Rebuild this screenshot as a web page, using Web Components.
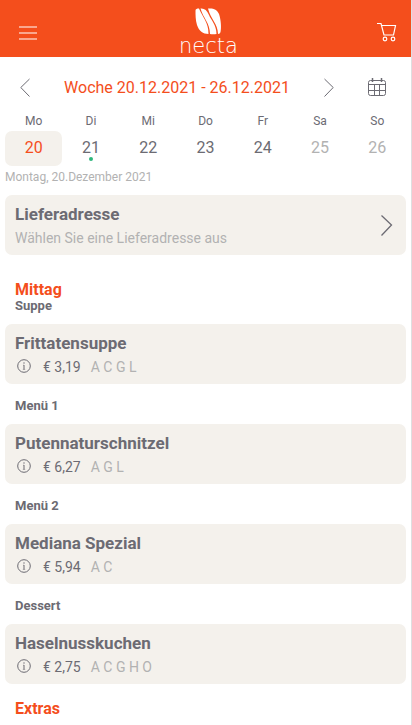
<!DOCTYPE html>
<html lang="de">
<head>
<meta charset="utf-8">
<meta name="viewport" content="width=device-width, initial-scale=1">
<title>necta</title>
<style>
    :root {
        --brand: #f44e1c;
        --text: #6c6b73;
        --muted: #b2b2b2;
        --panel: #f4f1ec;
        --line: #dedee0;
    }
    body {
        margin: 0;
        background: #fff;
        color: var(--text);
        font-family: Roboto, "Liberation Sans", sans-serif;
        font-size: 14px;
    }
</style>
</head>
<body>
<menu-app></menu-app>

<script>
class AppHeader extends HTMLElement {
    constructor() {
        super();
        this.attachShadow({ mode: 'open' });
        this.shadowRoot.innerHTML = `
            <style>
                :host { display: block; background: var(--brand); color: #fff; }
                header {
                    display: flex;
                    justify-content: space-between;
                    align-items: flex-end;
                    box-sizing: border-box;
                    height: 57px;
                    padding: 0 13px 0 18px;
                }
                button {
                    display: flex;
                    margin: 0 0 14px;
                    padding: 0;
                    border: none;
                    background: none;
                    color: inherit;
                    cursor: pointer;
                }
                .logo {
                    display: flex;
                    flex-direction: column;
                    align-items: center;
                    margin-left: 3px;
                    color: #fff;
                    text-decoration: none;
                }
                .logo span { font: 200 21px/22px "DejaVu Sans Light", "DejaVu Sans", sans-serif; }
            </style>
            <header>
                <button aria-label="Menü">
                    <svg width="20" height="20" viewBox="0 0 20 20" fill="none" stroke="#faa78e" stroke-width="2">
                        <path d="M1 4h18M1 10h18M1 16h18"/>
                    </svg>
                </button>
                <a class="logo" href="#">
                    <svg width="28" height="28" viewBox="0 0 28 28" fill="#fff" aria-hidden="true">
                        <path d="M1.500 3.500C1.500 2 3 1.500 5 1.500C7 6 9 9 11 13C13 17 14.500 21 14.500 27C9 27 5 24 3 18C1.500 13 1.500 8 1.500 3.500Z"/>
                        <path d="M6.500 1.500C10 1 13 3 15 8C17 13 22.500 18 22.500 27C20 27.500 17.500 27.300 16 27C16 16 9 11 6.500 1.500Z"/>
                        <path d="M14 1.500C19 1 23 2 25 7C27 13 27.500 21 26.500 25C26.200 26.300 25.500 26.800 24 27C24 17 16.500 12 14 1.500Z"/>
                    </svg>
                    <span>necta</span>
                </a>
                <button aria-label="Warenkorb">
                    <svg width="22" height="22" viewBox="0 0 22 22" fill="none" stroke="#fff" stroke-width="1.200">
                        <path d="M1 2.500h4l3 11.500h9.500l2-9.500H6"/>
                        <circle cx="9" cy="18" r="1.800"/>
                        <circle cx="17" cy="18" r="1.800"/>
                    </svg>
                </button>
            </header>
        `;
    }
}

class WeekNav extends HTMLElement {
    constructor() {
        super();
        this.attachShadow({ mode: 'open' });
        this.shadowRoot.innerHTML = `
            <style>
                :host { display: block; padding: 20px 24px 14px 20px; }
                nav { display: flex; align-items: center; }
                button {
                    display: flex;
                    padding: 0;
                    border: none;
                    background: none;
                    color: inherit;
                    cursor: pointer;
                }
                .calendar { margin-left: 33px; }
                h1 {
                    flex: 1;
                    margin: 0;
                    color: var(--brand);
                    font-size: 16px;
                    font-weight: 400;
                    line-height: 22px;
                    text-align: center;
                }
                svg { fill: none; stroke: currentColor; }
            </style>
            <nav aria-label="Woche">
                <button aria-label="Vorherige Woche">
                    <svg width="10" height="20" viewBox="0 0 10 20"><path d="M9.500 1L.800 9.500l8.700 9"/></svg>
                </button>
                <h1><slot></slot></h1>
                <button aria-label="Nächste Woche">
                    <svg width="10" height="20" viewBox="0 0 10 20"><path d="M.500 1l8.700 8.500L.500 18.500"/></svg>
                </button>
                <button class="calendar" aria-label="Kalender">
                    <svg width="20" height="20" viewBox="0 0 20 20">
                        <rect x="1.500" y="2.500" width="17" height="15" rx="2"/>
                        <path d="M1.500 6.500h17M2 12.500h16M7.500 7v10M12.500 7v10"/>
                        <path stroke-width="1.500" d="M5.500 0v4M14.500 0v4"/>
                    </svg>
                </button>
            </nav>
        `;
    }
}

class WeekDay extends HTMLElement {
    constructor() {
        super();
        this.attachShadow({ mode: 'open' });
        this.shadowRoot.innerHTML = `
            <style>
                :host { display: block; flex: 1 1 0; text-align: center; }
                label { display: block; font-size: 12px; line-height: 16px; }
                button {
                    position: relative;
                    width: 100%;
                    height: 35px;
                    margin-top: 2px;
                    padding: 0 0 2px;
                    border: none;
                    border-radius: 7px;
                    background: none;
                    color: inherit;
                    font: inherit;
                    font-size: 16px;
                    cursor: pointer;
                }
                :host([selected]) button { background: var(--panel); color: var(--brand); }
                :host([inactive]) button { color: var(--muted); }
                :host([ordered]) button::after {
                    content: "";
                    position: absolute;
                    left: 50%;
                    bottom: 5px;
                    width: 4px;
                    height: 4px;
                    margin-left: -2px;
                    border-radius: 50%;
                    background: #2fb67c;
                }
            </style>
            <label for="day"></label>
            <button id="day"><slot></slot></button>
        `;
        this.shadowRoot.querySelector('label').textContent = this.getAttribute('name');
    }
}

class AddressCard extends HTMLElement {
    constructor() {
        super();
        this.attachShadow({ mode: 'open' });
        this.shadowRoot.innerHTML = `
            <style>
                :host { display: block; margin: 10px 5px 26px; }
                button {
                    display: flex;
                    align-items: center;
                    justify-content: space-between;
                    width: 100%;
                    padding: 8px 13px 6px 10px;
                    border: none;
                    border-radius: 7px;
                    background: var(--panel);
                    color: inherit;
                    font: inherit;
                    text-align: left;
                    cursor: pointer;
                }
                .text { display: flex; flex-direction: column; gap: 2px; line-height: 22px; }
                strong { font-size: 17px; }
                .hint { color: var(--muted); }
                svg { fill: none; stroke: currentColor; stroke-width: 1.3; }
            </style>
            <button>
                <span class="text">
                    <strong>Lieferadresse</strong>
                    <span class="hint"><slot></slot></span>
                </span>
                <svg width="12" height="22" viewBox="0 0 12 22" aria-hidden="true"><path d="M.500 .500L10.500 10L.500 20.500"/></svg>
            </button>
        `;
    }
}

class MenuCategory extends HTMLElement {
    constructor() {
        super();
        this.attachShadow({ mode: 'open' });
        this.shadowRoot.innerHTML = `
            <style>
                :host { display: block; margin-top: 16px; }
                h2 {
                    margin: 0 15px;
                    color: var(--brand);
                    font-size: 16px;
                    font-weight: 700;
                    line-height: 18px;
                }
                .items { display: flex; flex-direction: column; gap: 15px; }
            </style>
            <section>
                <h2></h2>
                <div class="items"><slot></slot></div>
            </section>
        `;
        this.shadowRoot.querySelector('h2').textContent = this.getAttribute('name');
    }
}

class MenuItem extends HTMLElement {
    constructor() {
        super();
        this.attachShadow({ mode: 'open' });
        this.shadowRoot.innerHTML = `
            <style>
                :host { display: block; }
                h3 { margin: 0 15px 11px; font-size: 13px; font-weight: 700; line-height: 14px; }
                article {
                    margin: 0 5px;
                    padding: 8px 10px 6px;
                    border-radius: 7px;
                    background: var(--panel);
                    line-height: 22px;
                }
                h4 { margin: 0 0 2px; font-size: 17px; font-weight: 700; }
                .details { display: flex; align-items: center; }
                button {
                    display: flex;
                    margin: 0 10px 0 0;
                    padding: 0 1px;
                    border: none;
                    background: none;
                    color: inherit;
                    cursor: pointer;
                }
                .allergens { margin-left: 10px; color: var(--muted); }
            </style>
            <h3></h3>
            <article>
                <h4><slot></slot></h4>
                <div class="details">
                    <button aria-label="Information">
                        <svg width="16" height="16" viewBox="0 0 16 16" fill="none" stroke="currentColor">
                            <circle cx="8" cy="7" r="6.300"/>
                            <path d="M8 6v4.500"/>
                            <path stroke-width=".500" d="M7 6.200h1M6.800 10.400h2.400"/>
                            <circle cx="8" cy="4" r=".700" fill="currentColor" stroke="none"/>
                        </svg>
                    </button>
                    <span class="price"></span>
                    <span class="allergens"></span>
                </div>
            </article>
        `;
        this.shadowRoot.querySelector('h3').textContent = this.getAttribute('course');
        this.shadowRoot.querySelector('.price').textContent = this.getAttribute('price');
        this.shadowRoot.querySelector('.allergens').textContent = this.getAttribute('allergens');
    }
}

class MenuApp extends HTMLElement {
    constructor() {
        super();
        this.attachShadow({ mode: 'open' });
        this.shadowRoot.innerHTML = `
            <style>
                :host {
                    display: block;
                    box-sizing: border-box;
                    min-height: 100vh;
                    border-right: 1px solid var(--line);
                }
                .days { display: flex; margin: 0 5px; }
                .date {
                    margin: 3px 5px 0;
                    color: var(--muted);
                    font-size: 12px;
                    line-height: 16px;
                }
            </style>
            <app-header></app-header>
            <main>
                <week-nav>Woche 20.12.2021 - 26.12.2021</week-nav>
                <div class="days">
                    <week-day name="Mo" selected>20</week-day>
                    <week-day name="Di" ordered>21</week-day>
                    <week-day name="Mi">22</week-day>
                    <week-day name="Do">23</week-day>
                    <week-day name="Fr">24</week-day>
                    <week-day name="Sa" inactive>25</week-day>
                    <week-day name="So" inactive>26</week-day>
                </div>
                <p class="date">Montag, 20.Dezember 2021</p>
                <address-card>Wählen Sie eine Lieferadresse aus</address-card>
                <menu-category name="Mittag">
                    <menu-item course="Suppe" price="€ 3,19" allergens="A C G L">Frittatensuppe</menu-item>
                    <menu-item course="Menü 1" price="€ 6,27" allergens="A G L">Putennaturschnitzel</menu-item>
                    <menu-item course="Menü 2" price="€ 5,94" allergens="A C">Mediana Spezial</menu-item>
                    <menu-item course="Dessert" price="€ 2,75" allergens="A C G H O">Haselnusskuchen</menu-item>
                </menu-category>
                <menu-category name="Extras"></menu-category>
            </main>
        `;
    }
}

customElements.define('app-header', AppHeader);
customElements.define('week-nav', WeekNav);
customElements.define('week-day', WeekDay);
customElements.define('address-card', AddressCard);
customElements.define('menu-category', MenuCategory);
customElements.define('menu-item', MenuItem);
customElements.define('menu-app', MenuApp);
</script>
</body>
</html>
